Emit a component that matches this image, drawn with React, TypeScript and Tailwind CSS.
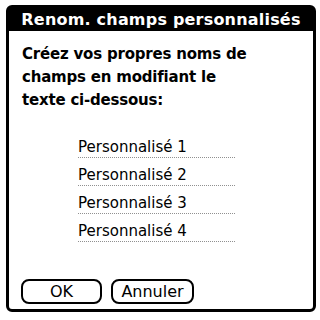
import React from 'react';

const fields = ['Personnalisé 1', 'Personnalisé 2', 'Personnalisé 3', 'Personnalisé 4'];

const App: React.FC = () => {
  return (
    <div className="w-[320px] h-[320px] bg-white pt-[5px] pl-[6px] font-['DejaVu_Sans',sans-serif] text-black">
      <div className="w-[310px] h-[307px] border-[3px] border-black rounded-[6px] flex flex-col">
        <div className="h-[23px] bg-black flex items-center justify-center">
          <span className="text-white font-bold text-[16px] tracking-[0.2px] leading-none">
            Renom. champs personnalisés
          </span>
        </div>
        <div className="flex-1 flex flex-col px-[10px]">
          <p className="mt-[12px] pl-[3px] font-bold text-[15px] leading-[23px] tracking-[-0.2px]">
            Créez vos propres noms de
            <br />
            champs en modifiant le
            <br />
            texte ci-dessous:
          </p>
          <div className="mt-[25px] ml-[59px] flex flex-col gap-[7px]">
            {fields.map((f) => (
              <div
                key={f}
                className="w-[157px] h-[21px] border-b border-dotted border-[#909090] text-[15px] leading-[20px]"
              >
                {f}
              </div>
            ))}
          </div>
          <div className="mt-auto mb-[5px] flex gap-[9px] pl-[2px]">
            <button className="w-[81px] h-[25px] border-2 border-black rounded-[8px] text-[16px] leading-none flex items-center justify-center">
              OK
            </button>
            <button className="w-[83px] h-[25px] border-2 border-black rounded-[8px] text-[16px] leading-none flex items-center justify-center">
              Annuler
            </button>
          </div>
        </div>
      </div>
    </div>
  );
};

export default App;
